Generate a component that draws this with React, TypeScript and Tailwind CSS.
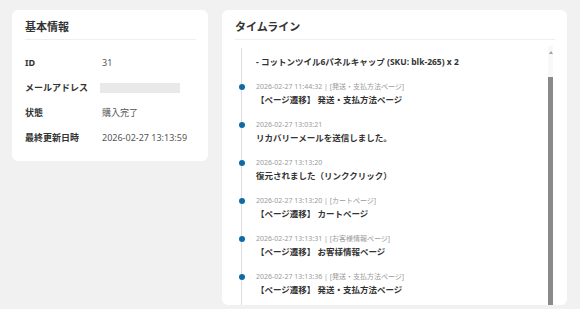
import React from 'react';

const font = { fontFamily: '"Noto Sans", "Noto Sans CJK JP", sans-serif' };

interface TimelineItem {
  meta: string;
  title: string;
}

const items: TimelineItem[] = [
  { meta: '2026-02-27 11:44:32 | [発送・支払方法ページ]', title: '【ページ遷移】 発送・支払方法ページ' },
  { meta: '2026-02-27 13:03:21', title: 'リカバリーメールを送信しました。' },
  { meta: '2026-02-27 13:13:20', title: '復元されました（リンククリック）' },
  { meta: '2026-02-27 13:13:20 | [カートページ]', title: '【ページ遷移】 カートページ' },
  { meta: '2026-02-27 13:13:31 | [お客様情報ページ]', title: '【ページ遷移】 お客様情報ページ' },
  { meta: '2026-02-27 13:13:36 | [発送・支払方法ページ]', title: '【ページ遷移】 発送・支払方法ページ' },
];

const InfoRow = ({ label, children }: { label: string; children: React.ReactNode }) => (
  <div className="flex h-[25px] items-center">
    <div className="w-[77px] shrink-0 text-[9px] font-bold text-[#333]">{label}</div>
    <div className="text-[9px] text-[#555]">{children}</div>
  </div>
);

export default function App() {
  return (
    <div style={font} className="w-[580px] h-[309px] overflow-hidden bg-[#f1f1f1] flex items-start gap-[14px] pl-[12px] pt-[10px]">
      {/* 基本情報 */}
      <div className="w-[196px] h-[151px] shrink-0 rounded-[6px] bg-white pl-[13px] pr-[12px] pt-[10px]">
        <h2 className="text-[11px] leading-[14px] font-bold text-[#333] pb-[5px] border-b border-[#efefef]">基本情報</h2>
        <div className="pt-[10px]">
          <InfoRow label="ID">31</InfoRow>
          <InfoRow label="メールアドレス">
            <div className="ml-[-2px] w-[80px] h-[10px] bg-[#e9e9e9]" />
          </InfoRow>
          <InfoRow label="状態">購入完了</InfoRow>
          <InfoRow label="最終更新日時">2026-02-27 13:13:59</InfoRow>
        </div>
      </div>

      {/* タイムライン */}
      <div className="w-[345px] h-[295px] shrink-0 rounded-[6px] bg-white pl-[13px] pr-[12px] pt-[10px] overflow-hidden flex flex-col">
        <h2 className="text-[11px] leading-[14px] font-bold text-[#333] pb-[5px] border-b border-[#efefef]">タイムライン</h2>
        <div className="relative flex-1 overflow-hidden">
          <div className="ml-[6px] mt-[8px] border-l border-[#dcdcdc] pl-[14px] pt-[7px] h-full">
            <div className="text-[8.5px] leading-[13px] font-bold text-[#333]">- コットンツイル6パネルキャップ (SKU: blk-265) x 2</div>
            {items.map((it, i) => (
              <div key={i} className="relative mt-[12px]">
                <span className="absolute left-[-17.5px] top-[3.5px] w-[6px] h-[6px] rounded-full bg-[#0f6ca3]" />
                <div className="text-[7px] leading-[13px] text-[#9a9a9a]">{it.meta}</div>
                <div className="text-[8.5px] leading-[13px] font-bold text-[#333]">{it.title}</div>
              </div>
            ))}
          </div>
          {/* scrollbar */}
          <div className="absolute right-[2px] top-[6px] bottom-0 w-[5px] flex flex-col items-center">
            <div className="w-full h-[31px] bg-[#f8f8f8] flex items-start justify-center pt-[5px]">
              <div className="w-0 h-0 border-l-[2px] border-r-[2px] border-b-[3px] border-l-transparent border-r-transparent border-b-[#a0a0a0]" />
            </div>
            <div className="w-full flex-1 bg-[#8a8a8a]" />
          </div>
        </div>
      </div>
    </div>
  );
}
